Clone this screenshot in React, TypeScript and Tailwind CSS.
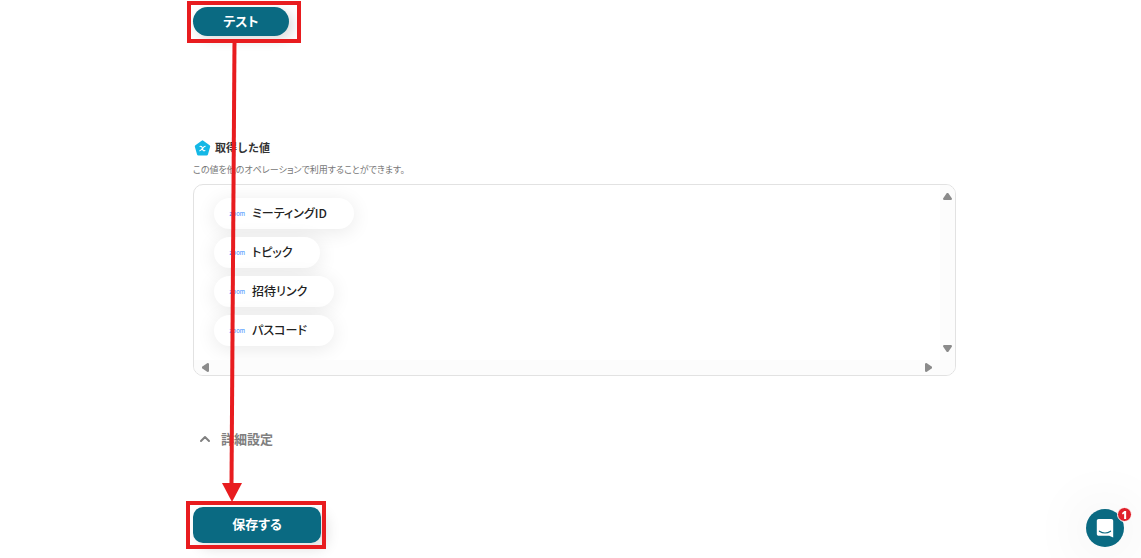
import { ChevronUp } from 'lucide-react'

const values = ['ミーティングID', 'トピック', '招待リンク', 'パスコード']

function PentagonIcon() {
  return (
    <svg viewBox="0 0 17 16" className="h-4 w-[17px]" aria-hidden="true">
      <path
        d="M8.5 1.8 14.8 6.3 12.6 14H4.4L2.2 6.3Z"
        fill="#14b8e6"
        stroke="#14b8e6"
        strokeWidth="2.8"
        strokeLinejoin="round"
      />
      <path
        d="M6 6.4C7.6 5.8 8 6.9 8.4 8.5S9.2 11.2 10.9 10.6M11.2 6.3C9.5 6.2 7.6 10.9 5.7 10.7"
        fill="none"
        stroke="#fff"
        strokeWidth="1.1"
        strokeLinecap="round"
      />
    </svg>
  )
}

function ValueChip({ label }: { label: string }) {
  return (
    <button className="flex h-[31px] items-center gap-[7px] rounded-full bg-white pr-[27px] pl-[15px] shadow-[0_3px_20px_rgba(0,0,0,0.09)]">
      <span className="w-4 text-right font-[Inter] text-[6px] leading-none text-[#2d8cff]">zoom</span>
      <span className="pb-0.5 text-xs font-medium text-[#222]">{label}</span>
    </button>
  )
}

function Highlight({ className }: { className: string }) {
  return <span className={`pointer-events-none absolute border-4 border-[#e81c1f] ${className}`} />
}

function ValuePanel() {
  return (
    <div className="grid grid-cols-[1fr_15px] grid-rows-[1fr_15px] overflow-hidden rounded-[10px] border border-[#e2e2e2]">
      <div className="flex flex-col items-start gap-2 overflow-hidden pt-[13px] pb-[14px] pl-5">
        {values.map((label) => (
          <ValueChip key={label} label={label} />
        ))}
      </div>
      <div className="flex flex-col items-center justify-between bg-[#fcfcfc] py-2 text-[#8b8b8b]">
        <svg viewBox="0 0 9 8" className="h-2 w-[9px]">
          <path d="M3.8 0h1.4L9 5.5 8.5 7H.5L0 5.5Z" fill="currentColor" />
        </svg>
        <svg viewBox="0 0 9 8" className="h-2 w-[9px]">
          <path d="M3.8 8h1.4L9 2.5 8.5 1H.5L0 2.5Z" fill="currentColor" />
        </svg>
      </div>
      <div className="flex items-center justify-between bg-[#fcfcfc] px-2 text-[#8b8b8b]">
        <svg viewBox="0 0 8 9" className="h-[9px] w-2">
          <path d="M0 3.8v1.4L5.5 9 7 8.5V.5L5.5 0Z" fill="currentColor" />
        </svg>
        <svg viewBox="0 0 8 9" className="h-[9px] w-2">
          <path d="M8 3.8v1.4L2.5 9 1 8.5V.5L2.5 0Z" fill="currentColor" />
        </svg>
      </div>
      <div className="bg-[#fcfcfc]" />
    </div>
  )
}

function ChatLauncher() {
  return (
    <div className="fixed right-[17px] bottom-[11px]">
      <button
        aria-label="チャット"
        className="flex size-[38px] items-center justify-center rounded-full bg-[#0a6a82] shadow-[0_2px_60px_rgba(0,0,0,0.12)]"
      >
        <svg viewBox="0 0 18 20" className="h-5 w-[18px]">
          <path
            d="M2.7 1h12.6c1 0 1.9.8 1.9 1.8V19.5l-4-1.8H2.7c-1 0-1.9-.8-1.9-1.8V2.8C.8 1.8 1.7 1 2.7 1Z"
            fill="#fff"
          />
          <path d="M3.4 13.2c3.4 2.2 7.8 2.2 11.2 0" fill="none" stroke="#0a6a82" strokeWidth="1.2" strokeLinecap="round" />
        </svg>
      </button>
      <span className="absolute -top-0.5 -right-2 flex size-[15px] items-center justify-center rounded-full border border-white bg-[#e0202a] font-['Open_Sans'] text-[10px] leading-none font-extrabold text-white">
        1
      </span>
    </div>
  )
}

export default function App() {
  return (
    <main className="relative bg-white pt-[7px] pr-[185px] pb-[15px] pl-[193px] font-['Noto_Sans_CJK_JP',sans-serif] [font-feature-settings:'palt']">
      <div className="relative w-24">
        <button className="flex h-[29px] w-full items-center justify-center rounded-full bg-[#0a6a82] pb-0.5 text-[13px] font-bold text-white shadow-[4px_4px_12px_rgba(0,0,0,0.14)]">
          テスト
        </button>
        <Highlight className="-top-1.5 -right-3 -bottom-[7px] -left-1.5" />
      </div>

      <section className="mt-[103px]">
        <h2 className="flex h-[18px] items-center gap-1 pl-px text-[11px] font-bold text-[#333] [font-feature-settings:normal]">
          <PentagonIcon />
          <span className="pb-0.5">取得した値</span>
        </h2>
        <p className="mt-1.5 mb-2 text-[9px] leading-[13px] text-[#777]">
          この値を他のオペレーションで利用することができます。
        </p>
        <ValuePanel />
      </section>

      <button className="mt-[53px] flex h-5 items-center gap-2 pl-1 text-[13px] font-bold text-[#808080]">
        <ChevronUp className="size-4" strokeWidth={3} />
        詳細設定
      </button>

      <div className="relative mt-[58px] w-32">
        <button className="flex h-9 w-full items-center justify-center rounded-[10px] bg-[#0a6a82] pb-0.5 text-[13px] font-bold text-white shadow-[6px_6px_14px_rgba(0,0,0,0.12)]">
          保存する
        </button>
        <Highlight className="-top-1.5 -right-[5px] -bottom-1.5 -left-[7px]" />
      </div>

      <svg
        viewBox="0 0 22 462"
        className="pointer-events-none absolute top-[41px] left-[221px] h-[462px] w-[22px]"
        aria-hidden="true"
      >
        <path d="M13.5 0 10.5 444" stroke="#e81c1f" strokeWidth="4" />
        <path d="M1 442h20l-10 19Z" fill="#e81c1f" />
      </svg>

      <ChatLauncher />
    </main>
  )
}
